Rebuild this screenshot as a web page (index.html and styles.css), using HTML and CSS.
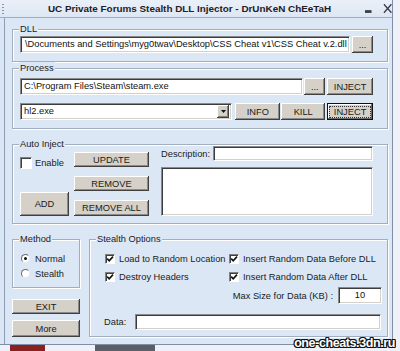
FILE: index.html
```html
<!DOCTYPE html>
<html lang="en">
<head>
    <meta charset="UTF-8">
    <title>UC Private Forums Stealth DLL Injector</title>
    <link rel="stylesheet" href="styles.css">
</head>
<body>
<div class="screen">
    <div class="window">
        <div class="titlebar">
            <span class="grip"></span>
            <span class="title">UC Private Forums Stealth DLL Injector - DrUnKeN ChEeTaH</span>
            <svg class="tb-min" width="8" height="4" viewBox="0 0 8 4"><rect x="0" y="0" width="7" height="3" fill="#3a3f48"/></svg>
            <svg class="tb-close" width="10" height="11" viewBox="0 0 10 11"><path d="M1 1 L9 10 M9 1 L1 10" stroke="#3a3f48" stroke-width="1.4" fill="none"/></svg>
        </div>

        <div class="client">
            <!-- DLL -->
            <div class="group group-dll">
                <div class="group-label">DLL</div>
                <div class="row row-dll">
                    <div class="field field-dll">\Documents and Settings\myg0twav\Desktop\CSS Cheat v1\CSS Cheat v.2.dll</div>
                    <div class="btn btn-browse">...</div>
                </div>
            </div>

            <!-- Process -->
            <div class="group group-process">
                <div class="group-label">Process</div>
                <div class="row row-exe">
                    <div class="field field-exe">C:\Program Files\Steam\steam.exe</div>
                    <div class="btn btn-browse2">...</div>
                    <div class="btn btn-inject">INJECT</div>
                </div>
                <div class="row row-proc">
                    <div class="field combo">
                        <span class="combo-text">hl2.exe</span>
                        <span class="combo-btn"><svg width="5" height="3" viewBox="0 0 5 3"><path d="M0 0 H5 L2.5 3 Z" fill="#111"/></svg></span>
                    </div>
                    <div class="btn btn-info">INFO</div>
                    <div class="btn btn-kill">KILL</div>
                    <div class="btn btn-inject btn-focus"><span class="focus-ring">INJECT</span></div>
                </div>
            </div>

            <!-- Auto Inject -->
            <div class="group group-auto">
                <div class="group-label">Auto Inject</div>
                <div class="auto-grid">
                    <div class="auto-col auto-left">
                        <label class="check check-enable"><span class="box"></span>Enable</label>
                        <div class="btn btn-add">ADD</div>
                    </div>
                    <div class="auto-col auto-mid">
                        <div class="btn btn-list">UPDATE</div>
                        <div class="btn btn-list">REMOVE</div>
                        <div class="btn btn-list btn-removeall">REMOVE ALL</div>
                    </div>
                    <div class="auto-col auto-right">
                        <div class="desc-row">
                            <span class="desc-label">Description:</span>
                            <div class="field field-desc"></div>
                        </div>
                        <div class="field field-list"></div>
                    </div>
                </div>
            </div>

            <!-- Method / Stealth -->
            <div class="bottom">
                <div class="bottom-left">
                    <div class="group group-method">
                        <div class="group-label">Method</div>
                        <div class="radios">
                            <label class="radio"><span class="dot on"></span>Normal</label>
                            <label class="radio"><span class="dot"></span>Stealth</label>
                        </div>
                    </div>
                    <div class="btn btn-exit">EXIT</div>
                    <div class="btn btn-more">More</div>
                </div>

                <div class="group group-stealth">
                    <div class="group-label">Stealth Options</div>
                    <div class="opts">
                        <label class="check"><span class="box checked"></span>Load to Random Location</label>
                        <label class="check"><span class="box checked"></span>Insert Random Data Before DLL</label>
                        <label class="check"><span class="box checked"></span>Destroy Headers</label>
                        <label class="check"><span class="box checked"></span>Insert Random Data After DLL</label>
                    </div>
                    <div class="maxsize">
                        <span>Max Size for Data (KB) :</span>
                        <div class="field field-size">10</div>
                    </div>
                    <div class="data-row">
                        <span>Data:</span>
                        <div class="field field-data"></div>
                    </div>
                </div>
            </div>
        </div>
    </div>
    <div class="desktop-strip">
        <span class="strip-red"></span>
        <span class="strip-dark"></span>
    </div>
    <div class="watermark">one-cheats.3dn.ru</div>
</div>
</body>
</html>
```

FILE: styles.css
```css
* {
    box-sizing: border-box;
}
body {
    margin: 0;
    background: #eef2f8;
    font-family: "Liberation Sans", Arial, sans-serif;
    font-size: 9.3px;
    color: #1b1b1b;
    overflow: hidden;
}
.screen {
    position: relative;
    width: 400px;
    height: 351px;
}
.window {
    width: 393px;
    height: 345px;
    background: #dbe7f5;
    border-right: 1px solid #7e8ea6;
    border-bottom: 1px solid #7e8ea6;
}

/* title bar */
.titlebar {
    height: 18px;
    display: flex;
    align-items: center;
    background: linear-gradient(#eaf0f8, #dde7f3);
    border-bottom: 1px solid #9eadc2;
}
.grip {
    width: 2px;
    height: 10px;
    margin-left: 2px;
    background: repeating-linear-gradient(#8a94a3 0 1px, transparent 1px 3px);
}
.title {
    margin-left: 44px;
    font-weight: bold;
    font-size: 9.9px;
    color: #1d2026;
    white-space: nowrap;
}
.tb-min {
    margin-left: 34px;
    margin-top: 6px;
}
.tb-close {
    margin-left: 10px;
}

/* client area */
.client {
    height: 326px;
    margin-left: 4px;
    border-left: 1px solid #8d9db5;
    padding: 0 4px 0 7px;
    overflow: hidden;
}

/* group boxes */
.group {
    border: 1px solid #a2adbd;
    box-shadow: inset 1px 1px 0 #fff, 1px 1px 0 #fff;
    padding: 0 14px 8px 7px;
}
.group-label {
    width: fit-content;
    margin: -7px 0 0 -1px;
    padding: 0 1px;
    line-height: 12px;
    background: #dbe7f5;
    color: #222;
}
.group-dll {
    margin-top: 11px;
}
.group-process {
    margin-top: 6px;
}
.group-auto {
    margin-top: 15px;
    padding-bottom: 7px;
}

.row {
    display: flex;
    align-items: center;
}
.row-dll {
    margin-top: 1px;
    gap: 2px;
}
.row-exe {
    margin-top: 4px;
    gap: 1px;
}
.row-proc {
    margin-top: 8px;
}

/* sunken fields */
.field {
    background: #fff;
    border-top: 1px solid #8a8a8a;
    border-left: 1px solid #8a8a8a;
    border-bottom: 1px solid #fff;
    border-right: 1px solid #fff;
    box-shadow: inset 1px 1px 0 #3c3c3c, inset -1px -1px 0 #d4d0c8;
    white-space: nowrap;
    overflow: hidden;
    line-height: 15px;
    padding: 0 3px;
    color: #111;
}
.field-dll {
    width: 330px;
    height: 17px;
    padding-left: 4px;
}
.field-exe {
    width: 285px;
    height: 17px;
}
.combo {
    width: 213px;
    height: 17px;
    display: flex;
    justify-content: space-between;
    padding-right: 2px;
}
.combo-btn {
    width: 12px;
    height: 13px;
    margin-top: 1px;
    background: #d4d0c8;
    box-shadow: inset -1px -1px 0 #404040, inset 1px 1px 0 #fff, inset -2px -2px 0 #808080;
    display: flex;
    align-items: center;
    justify-content: center;
}
.field-desc {
    width: 160px;
    height: 15px;
}
.field-list {
    width: 212px;
    height: 49px;
    margin-top: 6px;
}
.field-size {
    width: 44px;
    height: 17px;
    text-align: center;
}
.field-data {
    flex: 1;
    height: 16px;
    margin-right: 1px;
}

/* raised buttons */
.btn {
    height: 17px;
    display: flex;
    align-items: center;
    justify-content: center;
    background: #d5d1c9;
    box-shadow: inset -1px -1px 0 #404040, inset 1px 1px 0 #fff, inset -2px -2px 0 #8a8a8a;
    color: #1a1a1a;
    white-space: nowrap;
}
.btn-browse {
    width: 21px;
}
.btn-browse2 {
    width: 21px;
}
.btn-inject {
    width: 46px;
    margin-left: 1px;
}
.btn-info {
    width: 45px;
    margin-left: 3px;
}
.btn-kill {
    width: 44px;
    margin-left: 1px;
}
.row-proc .btn-inject {
    margin-left: 2px;
}
.btn-focus {
    border: 1px solid #111;
    box-shadow: inset -1px -1px 0 #6a6a6a, inset 1px 1px 0 #fff;
}
.focus-ring {
    border: 1px dotted #333;
    padding: 0 4px;
    line-height: 10px;
}

/* auto inject */
.auto-grid {
    display: flex;
    margin-top: -4px;
    height: 70px;
}
.auto-col {
    display: flex;
    flex-direction: column;
}
.auto-left {
    width: 49px;
}
.check-enable {
    margin-top: 9px;
}
.btn-add {
    height: 24px;
    margin-top: auto;
}
.auto-mid {
    width: 75px;
    margin-left: 5px;
    padding-top: 6px;
    gap: 9px;
}
.btn-list {
    height: 15px;
}
.btn-removeall {
    height: 16px;
}
.auto-right {
    margin-left: 12px;
}
.desc-row {
    display: flex;
    align-items: center;
    justify-content: space-between;
}

/* checkboxes and radios */
.check {
    display: flex;
    align-items: center;
    gap: 4px;
    height: 15px;
    white-space: nowrap;
}
.box {
    width: 10px;
    height: 10px;
    flex: none;
    background: #fff;
    border-top: 1px solid #808080;
    border-left: 1px solid #808080;
    border-bottom: 1px solid #fff;
    border-right: 1px solid #fff;
    box-shadow: inset 1px 1px 0 #404040;
}
.check-enable .box {
    width: 12px;
    height: 12px;
}
.check-enable {
    gap: 3px;
}
.box.checked {
    background: #fff url("data:image/svg+xml;utf8,<svg xmlns='http://www.w3.org/2000/svg' width='8' height='8' viewBox='0 0 8 8'><path d='M1.2 3.6 L3.2 5.8 L7 1.6' stroke='%23111' stroke-width='1.6' fill='none'/></svg>") no-repeat center;
}

.bottom {
    display: flex;
    margin-top: 15px;
    gap: 9px;
}
.bottom-left {
    width: 68px;
    display: flex;
    flex-direction: column;
}
.group-method {
    height: 49px;
    padding: 0 4px 0 7px;
}
.radios {
    margin-top: 6px;
}
.radio {
    display: flex;
    align-items: center;
    height: 15px;
    gap: 5px;
    padding-left: 1px;
}
.dot {
    width: 9px;
    height: 9px;
    border-radius: 50%;
    background: #fff;
    border: 1px solid;
    border-color: #6b6b6b #e8e8e8 #e8e8e8 #6b6b6b;
    display: flex;
    align-items: center;
    justify-content: center;
}
.dot.on::after {
    content: "";
    width: 3px;
    height: 3px;
    border-radius: 50%;
    background: #111;
}
.btn-exit {
    height: 15px;
    margin-top: 11px;
}
.btn-more {
    margin-top: 6px;
}

/* stealth options */
.group-stealth {
    width: 299px;
    height: 98px;
    padding: 0 5px 0 7px;
}
.opts {
    display: grid;
    grid-template-columns: 124px auto;
    grid-auto-rows: 15px;
    row-gap: 3px;
    margin: 6px 0 0 8px;
}
.maxsize {
    display: flex;
    justify-content: flex-end;
    align-items: center;
    gap: 5px;
    margin-top: 3px;
}
.data-row {
    display: flex;
    align-items: center;
    gap: 9px;
    margin: 10px 0 0 7px;
}

/* below the window */
.desktop-strip {
    height: 6px;
    display: flex;
}
.strip-red {
    width: 35px;
    margin-left: 10px;
    background: #8a2020;
}
.strip-dark {
    width: 60px;
    margin-left: 50px;
    background: #5a5f68;
}
.watermark {
    position: absolute;
    right: 5px;
    bottom: 1px;
    font-family: "Liberation Sans", Arial, sans-serif;
    font-weight: bold;
    font-size: 12.5px;
    letter-spacing: -0.4px;
    color: #fff;
    text-shadow: 1px 0 #111, -1px 0 #111, 0 1px #111, 0 -1px #111, 1px 1px #111, -1px -1px #111, 1px -1px #111, -1px 1px #111;
}
```
